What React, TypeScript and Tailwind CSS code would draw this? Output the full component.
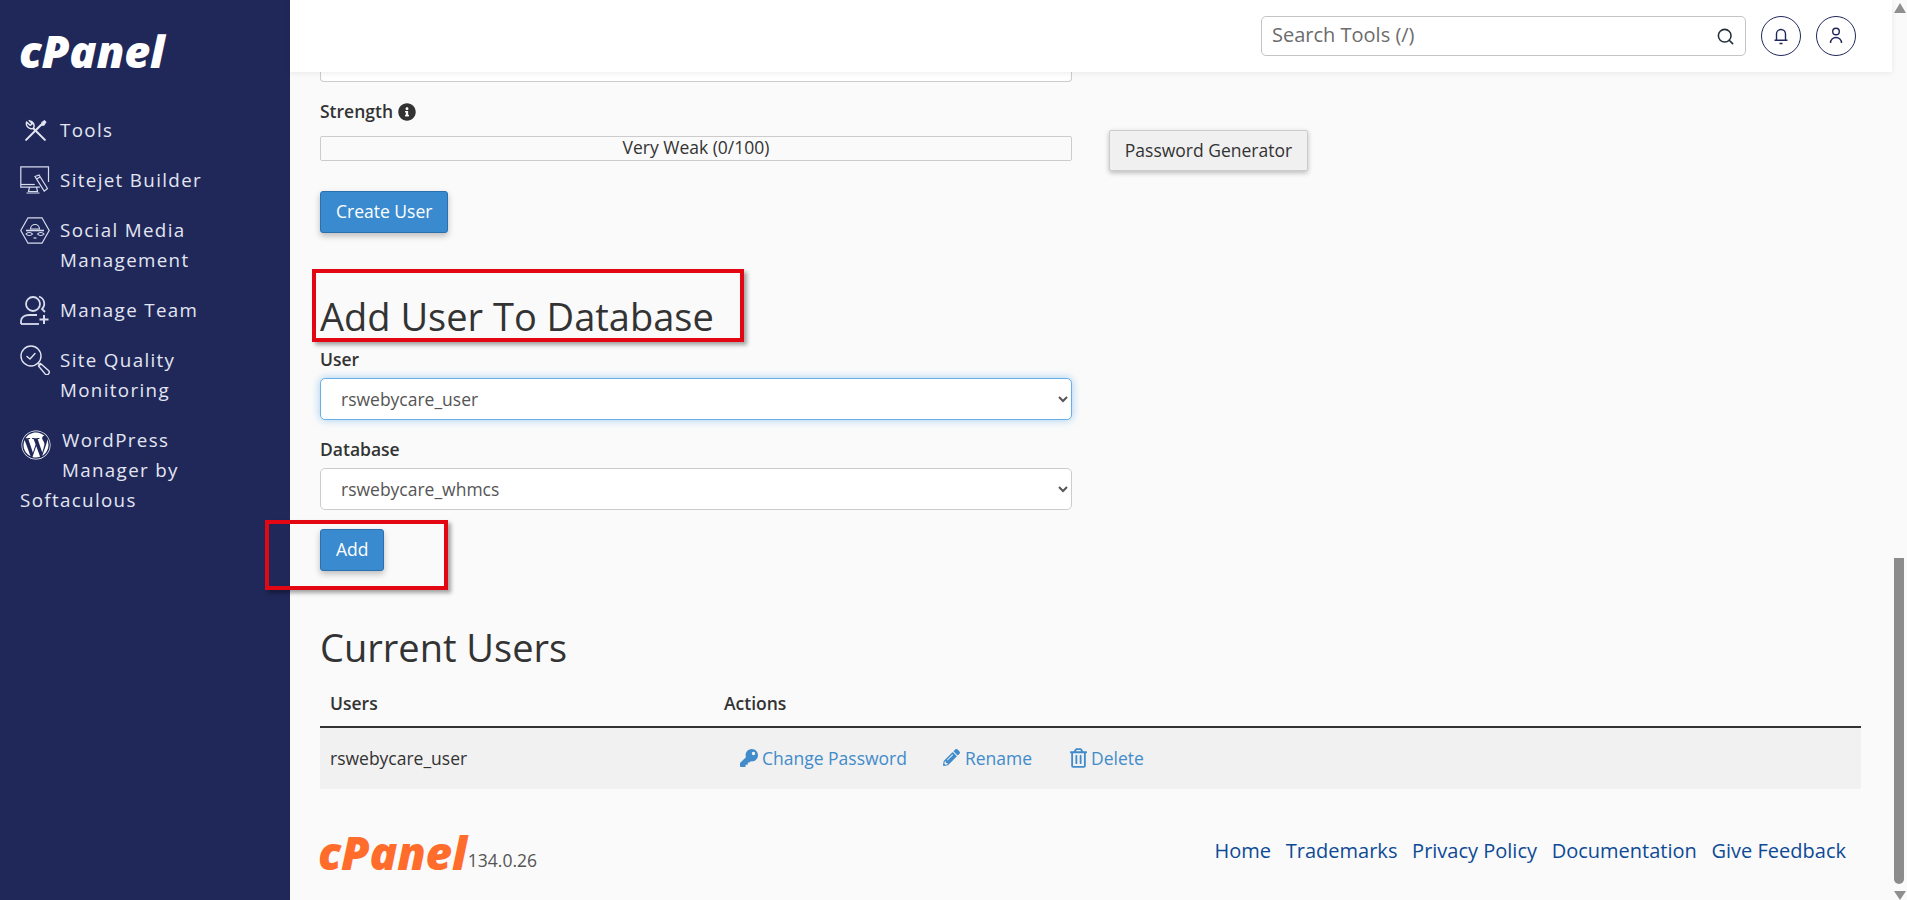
import { Search } from "lucide-react";
import { FaInfoCircle, FaKey, FaPencilAlt, FaRegTrashAlt, FaWordpress } from "react-icons/fa";

const font = "font-['Open_Sans','Noto_Sans',sans-serif]";

function Logo({ className }: { className: string }) {
  return (
    <span className={`block font-['Open_Sans',sans-serif] font-extrabold italic leading-none tracking-[-0.2px] ${className}`}>
      cPanel
    </span>
  );
}

function ToolsIcon() {
  return (
    <svg viewBox="0 0 24 24" className="ml-[3px] h-[25px] w-[25px]" fill="none" stroke="#e3e6f2" strokeWidth="2" strokeLinecap="round">
      <path d="M17.5 6.5 3 21" />
      <path d="M18 4.5 20.5 2.5 22 4 20 7 18 7Z" fill="#e3e6f2" strokeWidth="1" />
      <path d="M10 10 21 21" />
      <path d="M10 10A5 5 0 0 1 3.5 3.8L6.8 7 8.8 5.6 6 2.5A5 5 0 0 1 10 10Z" strokeWidth="1.4" strokeLinejoin="round" />
    </svg>
  );
}

function SitejetIcon() {
  return (
    <svg viewBox="0 0 30 29" className="h-[29px] w-[30px]" fill="none" stroke="#d8dcec" strokeWidth="1.2">
      <path d="M28.5 16V.8H.8v20.4h19" />
      <path d="M.8 18.5h14" />
      <path d="M9.5 21.2 8.5 25.5h9l-1-4.3M6.5 27h13" />
      <path d="M15 10.5 19 9l8.5 13.5-3.3 2.6Z" />
      <path d="M16.5 13 20 11" />
    </svg>
  );
}

function SocialIcon() {
  return (
    <svg viewBox="0 0 30 27" className="h-[27px] w-[30px]" fill="none" stroke="#d8dcec" strokeWidth="1.2">
      <path d="M8 .8h14L29.2 13.5 22 26.2H8L.8 13.5Z" />
      <path d="M10.5 12a4.5 4.5 0 0 1 9 0Z" />
      <path d="M6 13.5h18" strokeWidth="1.6" />
      <path d="M6 17c1.5-2 5-2 6.5 0-1.5 2-5 2-6.5 0ZM17.5 17c1.5-2 5-2 6.5 0-1.5 2-5 2-6.5 0Z" />
      <path d="M13.5 21h3" />
    </svg>
  );
}

function TeamIcon() {
  return (
    <svg viewBox="0 0 30 32" className="h-[32px] w-[30px]" fill="none" stroke="#d8dcec" strokeWidth="1.8">
      <circle cx="13" cy="10" r="7" />
      <path d="M19 2.5a7.5 7.5 0 0 1 3 12.5l3 3" />
      <path d="M1 30v-3c0-4 4-6 8-6h8" />
      <path d="M1 30h18" />
      <path d="M24 21v9M19.5 25.5h9" strokeWidth="2" />
    </svg>
  );
}

function QualityIcon() {
  return (
    <svg viewBox="0 0 30 30" className="h-[30px] w-[30px]" fill="none" stroke="#e3e6f2" strokeWidth="1.4" strokeLinecap="round" strokeLinejoin="round">
      <circle cx="11" cy="11" r="10" />
      <path d="M7 11.5 10 14l5-5.5" />
      <path d="M18.2 18.2 20 20" />
      <path d="M20.5 18.5 28.5 25.5a2.4 2.4 0 0 1-3.4 3.4L18.5 21Z" />
    </svg>
  );
}

function SideItem({ icon, children }: { icon: React.ReactNode; children: React.ReactNode }) {
  return (
    <a className="flex text-[18.75px] leading-[30px] tracking-[1.35px] text-[#e3e6f2]">
      <span className="flex h-[30px] w-[40px] shrink-0 items-center">{icon}</span>
      <span>{children}</span>
    </a>
  );
}

function Sidebar() {
  return (
    <aside className="flex h-full w-[290px] shrink-0 flex-col bg-[#20285a] pl-[19px] pr-[20px] pt-[28px] text-[#e3e6f2]">
      <Logo className="text-[45px] text-white" />
      <nav className="ml-[1px] mt-[42px] flex flex-col gap-[20px]">
        <SideItem icon={<ToolsIcon />}>Tools</SideItem>
        <SideItem icon={<SitejetIcon />}>Sitejet Builder</SideItem>
        <SideItem icon={<SocialIcon />}>
          Social Media
          <br />
          Management
        </SideItem>
        <SideItem icon={<TeamIcon />}>Manage Team</SideItem>
        <SideItem icon={<QualityIcon />}>
          Site Quality
          <br />
          Monitoring
        </SideItem>
        <a className="block text-[18.75px] leading-[30px] tracking-[1.35px] text-[#e3e6f2]">
          <span className="float-left mr-[11px] flex h-[40px] items-center">
            <FaWordpress className="ml-[1px] h-[30px] w-[30px] text-white" />
          </span>
          WordPress
          <br />
          Manager by
          <br />
          Softaculous
        </a>
      </nav>
    </aside>
  );
}

function Header() {
  return (
    <header className="relative z-10 flex h-[72px] shrink-0 items-center justify-end gap-[15px] bg-white pr-[36px] shadow-[0_1px_6px_rgba(0,0,0,0.08)]">
      <div className="flex h-[40px] w-[485px] items-center rounded-[5px] border border-[#c4c4c4] bg-white pl-[10px] pr-[10px]">
        <span className="-mt-[2px] flex-1 text-[20px] text-[#6c6c6c]">Search Tools (/)</span>
        <Search className="h-[19px] w-[19px] text-[#22303c]" strokeWidth={2} />
      </div>
      <button className="flex h-[40px] w-[40px] items-center justify-center rounded-full border border-[#20285a] text-[#20285a]">
        <svg viewBox="0 0 20 20" className="h-[20px] w-[20px]" fill="none" stroke="currentColor" strokeWidth="1.4">
          <path d="M5.5 14V8a4.5 4.5 0 0 1 9 0v6" />
          <path d="M3.5 14.2h13M8.5 17.5h3" />
        </svg>
      </button>
      <button className="flex h-[40px] w-[40px] items-center justify-center rounded-full border border-[#20285a] text-[#20285a]">
        <svg viewBox="0 0 20 20" className="h-[20px] w-[20px]" fill="none" stroke="currentColor" strokeWidth="1.4">
          <circle cx="10" cy="5.5" r="3.3" />
          <path d="M4.5 17a5.5 5.5 0 0 1 11 0" />
        </svg>
      </button>
    </header>
  );
}

// red marker drawn over the screenshot
function Marker({ className }: { className: string }) {
  return <div className={`pointer-events-none absolute z-20 border-[4px] border-[#e30613] shadow-[3px_3px_4px_rgba(0,0,0,0.35)] ${className}`} />;
}

function PrimaryButton({ children }: { children: React.ReactNode }) {
  return (
    <button className="h-[42px] rounded-[3px] border border-[#2a6fae] bg-[#3a8ad0] px-[15px] pb-[2px] text-[17.5px] text-white shadow-[0_3px_6px_rgba(0,0,0,0.25)]">
      {children}
    </button>
  );
}

function Field({ label, value, focused }: { label: string; value: string; focused?: boolean }) {
  return (
    <div className="w-[752px]">
      <label className="block h-[25px] text-[17.5px] font-semibold leading-[25px] text-[#333]">{label}</label>
      <select
        defaultValue={value}
        className={`mt-[6px] h-[42px] w-full rounded-[5px] border bg-white pl-[16px] pr-[2px] text-[17.5px] text-[#555] outline-none ${
          focused ? "border-[#66afe9] shadow-[0_0_8px_rgba(102,175,233,0.6)]" : "border-[#ccc]"
        }`}
      >
        <option>{value}</option>
      </select>
    </div>
  );
}

function Scrollbar() {
  return (
    <div className="flex h-full w-[15px] shrink-0 flex-col items-center bg-[#fafafa] pt-[3px]">
      <div className="h-0 w-0 border-x-[6px] border-b-[10px] border-x-transparent border-b-[#8f8f8f]" />
      <div className="ml-[-1px] mt-[545px] h-[327px] w-[10px] rounded-b-[5px] bg-[#8c8c8c]" />
      <div className="mt-[7px] h-0 w-0 border-x-[6px] border-t-[9px] border-x-transparent border-t-[#8f8f8f]" />
    </div>
  );
}

export default function App() {
  return (
    <div className={`flex h-screen w-full overflow-hidden bg-[#fafafa] text-[#333] ${font}`}>
      <Sidebar />
      <div className="flex min-w-0 flex-1 flex-col">
        <Header />
        <main className="flex flex-1 flex-col pl-[30px] pr-[31px]">
          <div className="h-[10px] w-[752px] rounded-b-[4px] border border-t-0 border-[#ccc] bg-white" />

          <div className="mt-[17px] flex h-[25px] items-center gap-[5px] text-[17.5px] font-semibold">
            Strength <FaInfoCircle className="h-[18px] w-[18px] text-[#333]" />
          </div>
          <div className="mt-[12px] flex items-start">
            <div className="flex h-[25px] w-[752px] items-center justify-center rounded-[2px] border border-[#ccc] pb-[2px] text-[17.5px] text-[#333]">
              Very Weak (0/100)
            </div>
            <button className="-mb-[10px] -mt-[6px] ml-[37px] h-[41px] w-[199px] rounded-[2px] border border-[#ccc] bg-[#f0f0f0] text-[17.5px] text-[#333] shadow-[0_2px_5px_rgba(0,0,0,0.25)]">
              Password Generator
            </button>
          </div>
          <div className="mt-[30px]">
            <PrimaryButton>Create User</PrimaryButton>
          </div>

          <div className="relative mt-[63px]">
            <Marker className="left-[-8px] top-[-27px] h-[73px] w-[432px]" />
            <h1 className="text-[38px] font-normal leading-[41px]">Add User To Database</h1>
          </div>
          <div className="mt-[10px]">
            <Field label="User" value="rswebycare_user" focused />
          </div>
          <div className="mt-[17px]">
            <Field label="Database" value="rswebycare_whmcs" />
          </div>
          <div className="relative mt-[19px]">
            <Marker className="left-[-55px] top-[-9px] h-[70px] w-[183px]" />
            <PrimaryButton>Add</PrimaryButton>
          </div>

          <h1 className="mt-[56px] text-[38px] font-normal leading-[41px]">Current Users</h1>
          <table className="mt-[22px] w-full text-[17.5px]">
            <thead>
              <tr className="border-b-[2.5px] border-[#333] text-left">
                <th className="h-[36px] w-[394px] px-[10px] pb-[10px] font-semibold">Users</th>
                <th className="px-[10px] pb-[10px] font-semibold">Actions</th>
              </tr>
            </thead>
            <tbody>
              <tr className="h-[62px] bg-[#f1f1f1]">
                <td className="px-[10px] pb-[2px]">rswebycare_user</td>
                <td className="px-[10px] pb-[2px]">
                  <div className="ml-[16px] flex text-[#428bca]">
                    <a className="flex items-center gap-[4px]">
                      <FaKey className="h-[18px] w-[18px]" /> Change Password
                    </a>
                    <a className="ml-[36px] flex items-center gap-[5px]">
                      <FaPencilAlt className="h-[17px] w-[17px]" /> Rename
                    </a>
                    <a className="ml-[38px] flex items-center gap-[4px]">
                      <FaRegTrashAlt className="h-[20px] w-[17px]" /> Delete
                    </a>
                  </div>
                </td>
              </tr>
            </tbody>
          </table>

          <footer className="mt-[48px] flex items-start justify-between pr-[15px]">
            <div className="-ml-[2px] -mt-[8px] flex items-end">
              <Logo className="text-[46px] text-[#ff6c2c]" />
              <span className="mb-[2px] ml-[1px] text-[17.5px] text-[#555]">134.0.26</span>
            </div>
            <nav className="flex gap-[14.7px] text-[20px] leading-[28px] text-[#0d4a96]">
              <a>Home</a>
              <a>Trademarks</a>
              <a>Privacy Policy</a>
              <a>Documentation</a>
              <a>Give Feedback</a>
            </nav>
          </footer>
        </main>
      </div>
      <Scrollbar />
    </div>
  );
}
